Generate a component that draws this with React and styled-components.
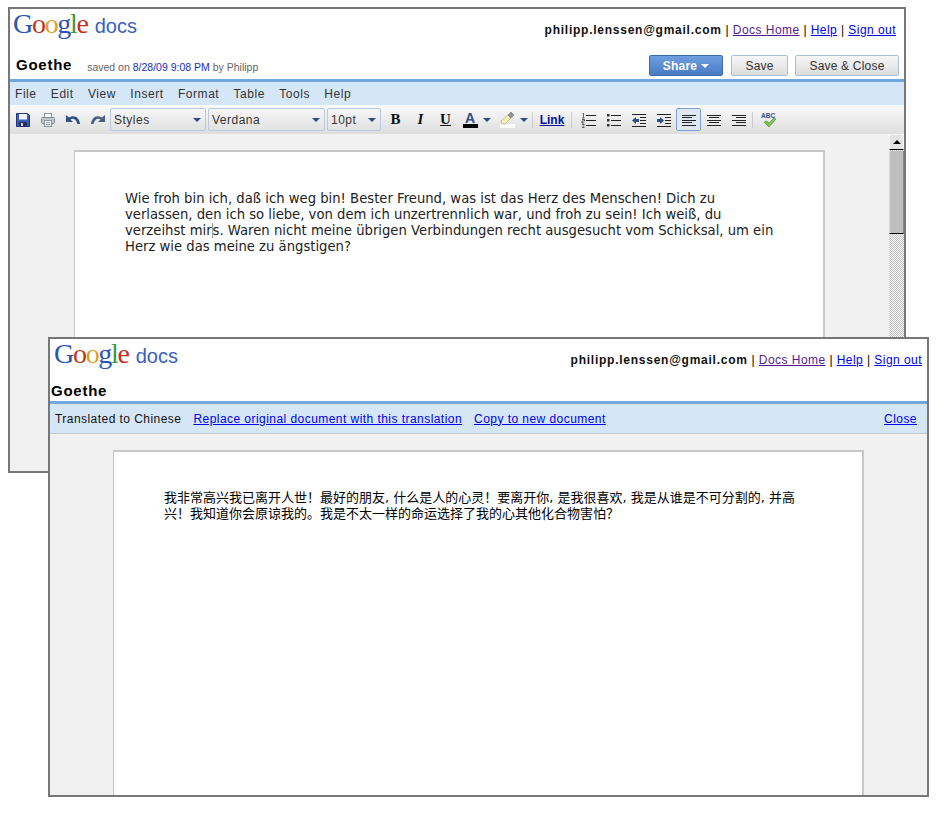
import styled, { createGlobalStyle } from "styled-components";

const GlobalStyle = createGlobalStyle`
  html, body {
    margin: 0;
    background: #fff;
    font-family: "Liberation Sans", Arial, sans-serif;
  }
`;

const cjk = `"DejaVu Sans", "Noto Sans CJK SC", sans-serif`;

const Desk = styled.div`
  position: relative;
  width: 948px;
  height: 813px;
  overflow: hidden;
`;

// the two windows are the free canvas here, everything in them flows
const Win = styled.div`
  position: absolute;
  left: ${(p) => p.$left}px;
  top: ${(p) => p.$top}px;
  width: ${(p) => p.$width}px;
  height: ${(p) => p.$height}px;
  box-sizing: border-box;
  border: 2px solid #777;
  background: #fff;
  display: flex;
  flex-direction: column;
  overflow: hidden;
`;

const TopRow = styled.div`
  height: ${(p) => p.$h}px;
  display: flex;
  justify-content: space-between;
  align-items: flex-start;
  padding: 0 ${(p) => p.$right}px 0 ${(p) => p.$left}px;
  flex: none;
`;

const Logo = styled.div`
  display: flex;
  align-items: baseline;
  margin-top: -1px;
  white-space: nowrap;
`;

const LogoWord = styled.span`
  font-family: "Liberation Serif", serif;
  font-size: 28px;
  line-height: 32px;
  letter-spacing: -1.3px;
`;

const L = styled.span`
  color: ${(p) => p.$c};
`;

const LogoDocs = styled.span`
  font-family: "Liberation Sans", sans-serif;
  font-size: 20px;
  color: #3a5fc0;
  margin-left: 7px;
`;

const UserLinks = styled.div`
  margin-top: 13px;
  font-size: 12px;
  line-height: 16px;
  letter-spacing: 0.45px;
  color: #000;
  white-space: nowrap;
`;

const Email = styled.b`
  color: #111;
  letter-spacing: 0.75px;
`;

const A = styled.a`
  color: ${(p) => (p.$visited ? "#551a8b" : "#0000ee")};
  text-decoration: underline;
`;

const TitleRow = styled.div`
  height: ${(p) => p.$h}px;
  display: flex;
  align-items: flex-start;
  padding: 3px 5px 0 ${(p) => p.$left}px;
  box-sizing: border-box;
  flex: none;
`;

const DocTitle = styled.div`
  font-family: "Liberation Sans", Arial, sans-serif;
  font-weight: bold;
  font-size: 15px;
  letter-spacing: 0.75px;
  line-height: 20px;
  color: #000;
  margin-top: ${(p) => p.$mt || 0}px;
`;

const Saved = styled.div`
  margin: 5px 0 0 15px;
  font-size: 10.5px;
  line-height: 14px;
  color: #666;
  flex: 1;
`;

const DateText = styled.span`
  color: #1a2fc0;
`;

const Btn = styled.div`
  box-sizing: border-box;
  width: ${(p) => p.$w}px;
  height: 21px;
  margin-left: ${(p) => p.$ml}px;
  border: 1px solid ${(p) => (p.$primary ? "#3d6bb0" : "#a9bfdc")};
  border-radius: 2px;
  background: ${(p) =>
    p.$primary
      ? "linear-gradient(#6d9ee0, #4a7cc4)"
      : "linear-gradient(#f7f7f7, #dcdcdc)"};
  color: ${(p) => (p.$primary ? "#fff" : "#333")};
  font-size: 12px;
  font-weight: ${(p) => (p.$primary ? "bold" : "normal")};
  letter-spacing: 0.2px;
  display: flex;
  align-items: center;
  justify-content: center;
  gap: 4px;
`;

const WhiteCaret = styled.span`
  width: 0;
  height: 0;
  border: 4px solid transparent;
  border-top: 4px solid #fff;
  border-bottom: 0;
`;

const BlueLine = styled.div`
  height: 3px;
  background: #6fa7de;
  flex: none;
`;

const MenuBar = styled.div`
  height: 23px;
  background: #d5e7f7;
  display: flex;
  align-items: center;
  gap: 14.3px;
  padding-left: 5px;
  flex: none;
  font-size: 12px;
  letter-spacing: 0.55px;
  color: #333;
`;

const Toolbar = styled.div`
  height: 29px;
  background: linear-gradient(#fafafa, #dedede);
  display: flex;
  align-items: center;
  flex: none;
`;

const Tool = styled.div`
  box-sizing: border-box;
  width: ${(p) => p.$w || 25}px;
  height: 23px;
  flex: none;
  display: flex;
  align-items: center;
  justify-content: center;
  gap: ${(p) => p.$gap || 0}px;
  border: 1px solid ${(p) => (p.$active ? "#7d9fd0" : "transparent")};
  border-radius: 2px;
  background: ${(p) => (p.$active ? "#dfe7f3" : "transparent")};
`;

const Select = styled.div`
  box-sizing: border-box;
  width: ${(p) => p.$w}px;
  height: 23px;
  margin-right: 2px;
  flex: none;
  border: 1px solid #b9c9e2;
  border-radius: 2px;
  display: flex;
  align-items: center;
  justify-content: space-between;
  padding: 0 4px 0 3px;
  font-size: 12px;
  letter-spacing: 0.5px;
  color: #333;
`;

const Caret = styled.span`
  width: 0;
  height: 0;
  border: 4px solid transparent;
  border-top: 4px solid #2f4a7c;
  border-bottom: 0;
  flex: none;
`;

const Sep = styled.div`
  width: 1px;
  height: 16px;
  background: #ccc;
  flex: none;
  margin: 0 ${(p) => p.$r || 0}px 0 ${(p) => p.$l || 0}px;
`;

const Glyph = styled.span`
  font-family: "Liberation Serif", serif;
  font-weight: bold;
  font-style: ${(p) => (p.$i ? "italic" : "normal")};
  text-decoration: ${(p) => (p.$u ? "underline" : "none")};
  font-size: 15px;
  color: #111;
`;

const ColorA = styled.span`
  box-sizing: border-box;
  width: 15px;
  height: 16px;
  border-bottom: 4px solid #000;
  font-family: "Liberation Sans", sans-serif;
  font-weight: bold;
  font-size: 14px;
  line-height: 12px;
  color: #2f4a8c;
  text-align: center;
`;

const LinkTool = styled.a`
  width: 38px;
  flex: none;
  text-align: center;
  font-size: 12px;
  font-weight: bold;
  color: #00109c;
  text-decoration: underline;
`;

const Canvas = styled.div`
  flex: 1;
  min-height: 0;
  display: flex;
  background: #f1f1f1;
  overflow: hidden;
`;

const PageArea = styled.div`
  flex: 1;
  display: flex;
  padding: 16px 0 0 ${(p) => p.$left}px;
  min-width: 0;
`;

const Page = styled.div`
  box-sizing: border-box;
  width: 751px;
  min-height: 500px;
  flex: none;
  background: #fff;
  border: 1px solid #c8c8c8;
  border-right-width: 2px;
  border-top-width: 2px;
  padding: ${(p) => p.$pt}px 50px 0 50px;
`;

const BodyText = styled.div`
  font-family: "DejaVu Sans", Verdana, sans-serif;
  font-size: 13.2px;
  line-height: 16px;
  color: #222;
`;

const BodyLine = styled.div`
  white-space: nowrap;
`;

const CnText = styled.p`
  margin: 0;
  font-family: ${cjk};
  font-size: 13px;
  line-height: 16px;
  color: #000;
`;

const Scrollbar = styled.div`
  width: 15px;
  flex: none;
  display: flex;
  flex-direction: column;
  background: repeating-conic-gradient(#bdbdbd 0 25%, #fff 0 50%) 0 0 / 2px 2px;
`;

const ScrollBtn = styled.div`
  box-sizing: border-box;
  height: 16px;
  background: #e4e4e4;
  border: 1px solid #f6f6f6;
  border-bottom: 1px solid #000;
  display: flex;
  align-items: center;
  justify-content: center;
`;

const UpArrow = styled.span`
  width: 0;
  height: 0;
  border: 4px solid transparent;
  border-bottom: 4px solid #000;
  border-top: 0;
`;

const Thumb = styled.div`
  box-sizing: border-box;
  height: 83px;
  margin-top: 1px;
  background: #bfbfbf;
  border-left: 1px solid #d8d8d8;
  border-right: 1px solid #8a8a8a;
  border-bottom: 1px solid #000;
`;

const Caretline = styled.span`
  border-left: 1px solid #999;
`;

const TransBar = styled.div`
  height: 29px;
  box-sizing: content-box;
  background: #d5e7f7;
  border-bottom: 1px solid #c8c8c8;
  display: flex;
  align-items: center;
  padding: 0 10px 0 5px;
  font-size: 12px;
  letter-spacing: 0.45px;
  color: #111;
  white-space: nowrap;
  flex: none;
`;

const BarLink = styled(A)`
  margin-left: 12px;
`;

const Spacer = styled.div`
  flex: 1;
`;

const Ico = ({ children }) => (
  <svg width="16" height="16" viewBox="0 0 16 16" style={{ display: "block" }}>
    {children}
  </svg>
);

const IconSave = () => (
  <Ico>
    <path d="M1.5 1.5h11l2 2v11h-13z" fill="#3b5bb5" stroke="#22357c" />
    <rect x="4" y="2" width="8" height="5.5" fill="#eef2fa" />
    <rect x="4" y="10" width="8" height="4.5" fill="#26305c" />
    <rect x="6" y="11" width="2" height="3" fill="#cfd6e8" />
  </Ico>
);

const IconPrint = () => (
  <Ico>
    <rect x="4.5" y="1.5" width="7" height="5" fill="#fff" stroke="#8a8f99" />
    <rect x="1.5" y="5.5" width="13" height="6" rx="1" fill="#c4c8cf" stroke="#80858f" />
    <rect x="4.5" y="8.5" width="7" height="6" fill="#fff" stroke="#8a8f99" />
    <path d="M6 10.5h4M6 12.5h4" stroke="#8a8f99" />
  </Ico>
);

const IconUndo = ({ flip }) => (
  <Ico>
    <g transform={flip ? "matrix(-1 0 0 1 16 0)" : undefined}>
      <path
        d="M1 3v7h7L5.5 7.5C8 6 11 7 12.5 12H15C14.5 6 10 2 4 5.5z"
        fill={flip ? "#4b5f80" : "#2f4f86"}
      />
    </g>
  </Ico>
);

const IconHighlight = () => (
  <Ico>
    <rect x="0" y="12" width="15" height="4" fill="#fff" />
    <path d="M1 9l7-6 3 3-6 6H2z" fill="#f7f2b8" stroke="#a8a67a" strokeWidth="0.7" />
    <path d="M8 3l3-3 3 3-3 3z" fill="#8f949c" stroke="#666" strokeWidth="0.5" />
  </Ico>
);

const Lines = ({ rows }) => (
  <Ico>
    {rows.map(([x1, x2, y], i) => (
      <path key={i} d={`M${x1} ${y}.5H${x2}`} stroke="#222" />
    ))}
  </Ico>
);

const IconOl = () => (
  <Ico>
    <path d="M5 3.5h10M5 8.5h10M5 13.5h10" stroke="#222" />
    <path d="M1.5 1.5h1v4M1 6h2.5M1 7.5h2.5v1.5H1V11h2.5M1 12.5h2.5M1.5 14h2M1 15.5h2.5" stroke="#222" strokeWidth="0.7" fill="none" />
  </Ico>
);

const IconUl = () => (
  <Ico>
    <path d="M5 3.5h10M5 8.5h10M5 13.5h10" stroke="#222" />
    <rect x="1" y="2" width="2.5" height="2.5" fill="#333" />
    <rect x="1" y="7" width="2.5" height="2.5" fill="#333" />
    <rect x="1" y="12" width="2.5" height="2.5" fill="#333" />
  </Ico>
);

const IconIndent = ({ out }) => (
  <Ico>
    <path d="M1 2.5h14M9 5.5h6M9 8.5h6M9 11.5h6M1 14.5h14" stroke="#222" />
    <path
      d={out ? "M1 8.5l4-3.5v2h3v3H5v2z" : "M8 8.5l-4-3.5v2H1v3h3v2z"}
      fill="#2f4a8c"
    />
  </Ico>
);

const IconSpell = () => (
  <Ico>
    <text x="0" y="6" fontFamily="Liberation Sans" fontSize="6.5" fontWeight="bold" fill="#2f4a8c">
      ABC
    </text>
    <path d="M3 10l3-1 2 2 5-5 2 1-7 8z" fill="#7cc24c" stroke="#4d8a2c" strokeWidth="0.6" />
  </Ico>
);

const GoogleLogo = () => (
  <Logo>
    <LogoWord>
      <L $c="#2b55b5">G</L>
      <L $c="#c4321f">o</L>
      <L $c="#d6a51c">o</L>
      <L $c="#2b55b5">g</L>
      <L $c="#3c9a3a">l</L>
      <L $c="#c4321f">e</L>
    </LogoWord>
    <LogoDocs>docs</LogoDocs>
  </Logo>
);

const Account = () => (
  <UserLinks>
    <Email>philipp.lenssen@gmail.com</Email> | <A $visited>Docs Home</A> | <A>Help</A> | <A>Sign out</A>
  </UserLinks>
);

const menu = ["File", "Edit", "View", "Insert", "Format", "Table", "Tools", "Help"];

export default function App() {
  return (
    <Desk>
      <GlobalStyle />
      <Win $left={8} $top={7} $width={898} $height={466}>
        <TopRow $h={43} $left={3} $right={8}>
          <GoogleLogo />
          <Account />
        </TopRow>
        <TitleRow $h={27} $left={6}>
          <DocTitle>Goethe</DocTitle>
          <Saved>
            saved on <DateText>8/28/09 9:08 PM</DateText> by Philipp
          </Saved>
          <Btn $primary $w={74}>
            Share <WhiteCaret />
          </Btn>
          <Btn $w={57} $ml={8}>Save</Btn>
          <Btn $w={104} $ml={7}>Save &amp; Close</Btn>
        </TitleRow>
        <BlueLine />
        <MenuBar>
          {menu.map((m) => (
            <span key={m}>{m}</span>
          ))}
        </MenuBar>
        <Toolbar>
          <Tool><IconSave /></Tool>
          <Tool><IconPrint /></Tool>
          <Tool><IconUndo /></Tool>
          <Tool><IconUndo flip /></Tool>
          <Select $w={96}>Styles <Caret /></Select>
          <Select $w={117}>Verdana <Caret /></Select>
          <Select $w={54}>10pt <Caret /></Select>
          <Tool><Glyph>B</Glyph></Tool>
          <Tool><Glyph $i>I</Glyph></Tool>
          <Tool><Glyph $u>U</Glyph></Tool>
          <Tool $w={37} $gap={5}><ColorA>A</ColorA><Caret /></Tool>
          <Tool $w={37} $gap={4}><IconHighlight /><Caret /></Tool>
          <Sep />
          <LinkTool>Link</LinkTool>
          <Sep $r={4} />
          <Tool><IconOl /></Tool>
          <Tool><IconUl /></Tool>
          <Tool><IconIndent out /></Tool>
          <Tool><IconIndent /></Tool>
          <Tool $active>
            <Lines rows={[[1, 15, 3], [1, 11, 5], [1, 15, 8], [1, 11, 10], [1, 15, 13]]} />
          </Tool>
          <Tool>
            <Lines rows={[[1, 15, 3], [3, 13, 5], [1, 15, 8], [3, 13, 10], [1, 15, 13]]} />
          </Tool>
          <Tool>
            <Lines rows={[[1, 15, 3], [5, 15, 5], [1, 15, 8], [5, 15, 10], [1, 15, 13]]} />
          </Tool>
          <Sep $l={1} $r={3} />
          <Tool><IconSpell /></Tool>
        </Toolbar>
        <Canvas>
          <PageArea $left={64}>
            <Page $pt={39}>
              <BodyText>
                <BodyLine>Wie froh bin ich, daß ich weg bin! Bester Freund, was ist das Herz des Menschen! Dich zu</BodyLine>
                <BodyLine>verlassen, den ich so liebe, von dem ich unzertrennlich war, und froh zu sein! Ich weiß, du</BodyLine>
                <BodyLine>verzeihst mir<Caretline />s. Waren nicht meine übrigen Verbindungen recht ausgesucht vom Schicksal, um ein</BodyLine>
                <BodyLine>Herz wie das meine zu ängstigen?</BodyLine>
              </BodyText>
            </Page>
          </PageArea>
          <Scrollbar>
            <ScrollBtn><UpArrow /></ScrollBtn>
            <Thumb />
          </Scrollbar>
        </Canvas>
      </Win>

      <Win $left={48} $top={337} $width={881} $height={460}>
        <TopRow $h={42} $left={4} $right={5}>
          <GoogleLogo />
          <Account />
        </TopRow>
        <TitleRow $h={20} $left={1}>
          <DocTitle $mt={-3}>Goethe</DocTitle>
        </TitleRow>
        <BlueLine />
        <TransBar>
          Translated to Chinese
          <BarLink>Replace original document with this translation</BarLink>
          <BarLink>Copy to new document</BarLink>
          <Spacer />
          <BarLink>Close</BarLink>
        </TransBar>
        <Canvas>
          <PageArea $left={63}>
            <Page $pt={38}>
              <CnText>
                我非常高兴我已离开人世！最好的朋友, 什么是人的心灵！要离开你, 是我很喜欢, 我是从谁是不可分割的, 并高兴！我知道你会原谅我的。我是不太一样的命运选择了我的心其他化合物害怕？
              </CnText>
            </Page>
          </PageArea>
        </Canvas>
      </Win>
    </Desk>
  );
}
